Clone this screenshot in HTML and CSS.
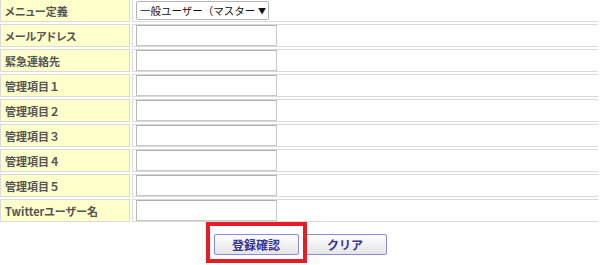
FILE: index.html
```html
<!DOCTYPE html>
<html lang="ja">
<head>
<meta charset="utf-8">
<link rel="stylesheet" href="styles.css">
</head>
<body>
<form class="form">
  <table class="grid">
    <tr>
      <th>メニュー定義</th>
      <td>
        <span class="select-wrap">
          <select class="select"><option>一般ユーザー（マスター付き）</option></select>
          <span class="arrow">▼</span>
        </span>
      </td>
    </tr>
    <tr><th>メールアドレス</th><td><input class="text" type="text"></td></tr>
    <tr><th>緊急連絡先</th><td><input class="text" type="text"></td></tr>
    <tr><th>管理項目<span class="num">１</span></th><td><input class="text" type="text"></td></tr>
    <tr><th>管理項目<span class="num">２</span></th><td><input class="text" type="text"></td></tr>
    <tr><th>管理項目<span class="num">３</span></th><td><input class="text" type="text"></td></tr>
    <tr><th>管理項目<span class="num">４</span></th><td><input class="text" type="text"></td></tr>
    <tr><th>管理項目<span class="num">５</span></th><td><input class="text" type="text"></td></tr>
    <tr><th>Twitterユーザー名</th><td><input class="text" type="text"></td></tr>
  </table>
  <div class="actions">
    <span class="highlight-wrap">
      <button type="button" class="btn btn-confirm">登録確認</button>
      <span class="highlight"></span>
    </span>
    <button type="button" class="btn btn-clear">クリア</button>
  </div>
</form>
</body>
</html>
```
FILE: styles.css
```css
html, body {
  margin: 0;
  padding: 0;
  background: #fff;
}
body {
  font-family: "Noto Sans CJK JP", "Noto Sans", sans-serif;
  font-size: 12px;
}
.form {
  margin: 0;
  padding-bottom: 20px;
}
.grid {
  border-collapse: separate;
  border-spacing: 2px;
  margin: -3px 0 0 -2px;
  width: 602px;
}
.grid th,
.grid td {
  box-sizing: border-box;
  height: 23px;
  border: 1px solid #d9d9d9;
  padding: 0;
}
.grid th {
  width: 130px;
  background: #ffffcc;
  color: #555;
  font-weight: bold;
  font-size: 11px;
  font-feature-settings: "palt";
  text-align: left;
  padding-left: 4px;
  line-height: 20px;
  white-space: nowrap;
}
.grid th .num {
  font-feature-settings: normal;
}
.grid td {
  border-right: 0;
  padding: 0 3px;
  background: #fff;
  line-height: 0;
}
.text {
  display: block;
  box-sizing: border-box;
  width: 141px;
  height: 21px;
  margin: 0;
  border: 1px solid #c8c8c8;
  border-top-color: #b0b0b0;
  border-left-color: #b8b8b8;
  padding: 0 2px;
  background: #fff;
}
.select-wrap {
  position: relative;
  display: block;
  width: 133px;
  height: 19px;
}
.select {
  appearance: none;
  -webkit-appearance: none;
  display: block;
  box-sizing: border-box;
  width: 133px;
  height: 19px;
  margin: 0;
  border: 1px solid #b4b4b4;
  border-radius: 2px;
  background: #fff;
  font-family: "Noto Sans CJK JP", sans-serif;
  font-size: 10.5px;
  color: #111;
  padding: 0 13px 0 3px;
  line-height: 17px;
}
.arrow {
  position: absolute;
  right: 3px;
  top: 5px;
  font-size: 8px;
  line-height: 10px;
  color: #111;
  pointer-events: none;
}
.actions {
  display: flex;
  justify-content: center;
  gap: 5px;
  margin-top: 10px;
}
.highlight-wrap {
  position: relative;
  display: block;
}
.highlight {
  position: absolute;
  left: -8px;
  right: -8px;
  top: -12px;
  bottom: -8px;
  border: 4px solid #e81c24;
  pointer-events: none;
}
.btn {
  display: block;
  box-sizing: border-box;
  height: 21px;
  margin: 0;
  padding: 0;
  border: 1px solid #8a8ae0;
  border-radius: 2px;
  background: linear-gradient(#ffffff, #e4e4e4);
  color: #333399;
  font-family: "Noto Sans CJK JP", sans-serif;
  font-weight: bold;
  font-size: 12px;
  line-height: 19px;
}
.btn-confirm { width: 85px; }
.btn-clear { width: 83px; }
```
